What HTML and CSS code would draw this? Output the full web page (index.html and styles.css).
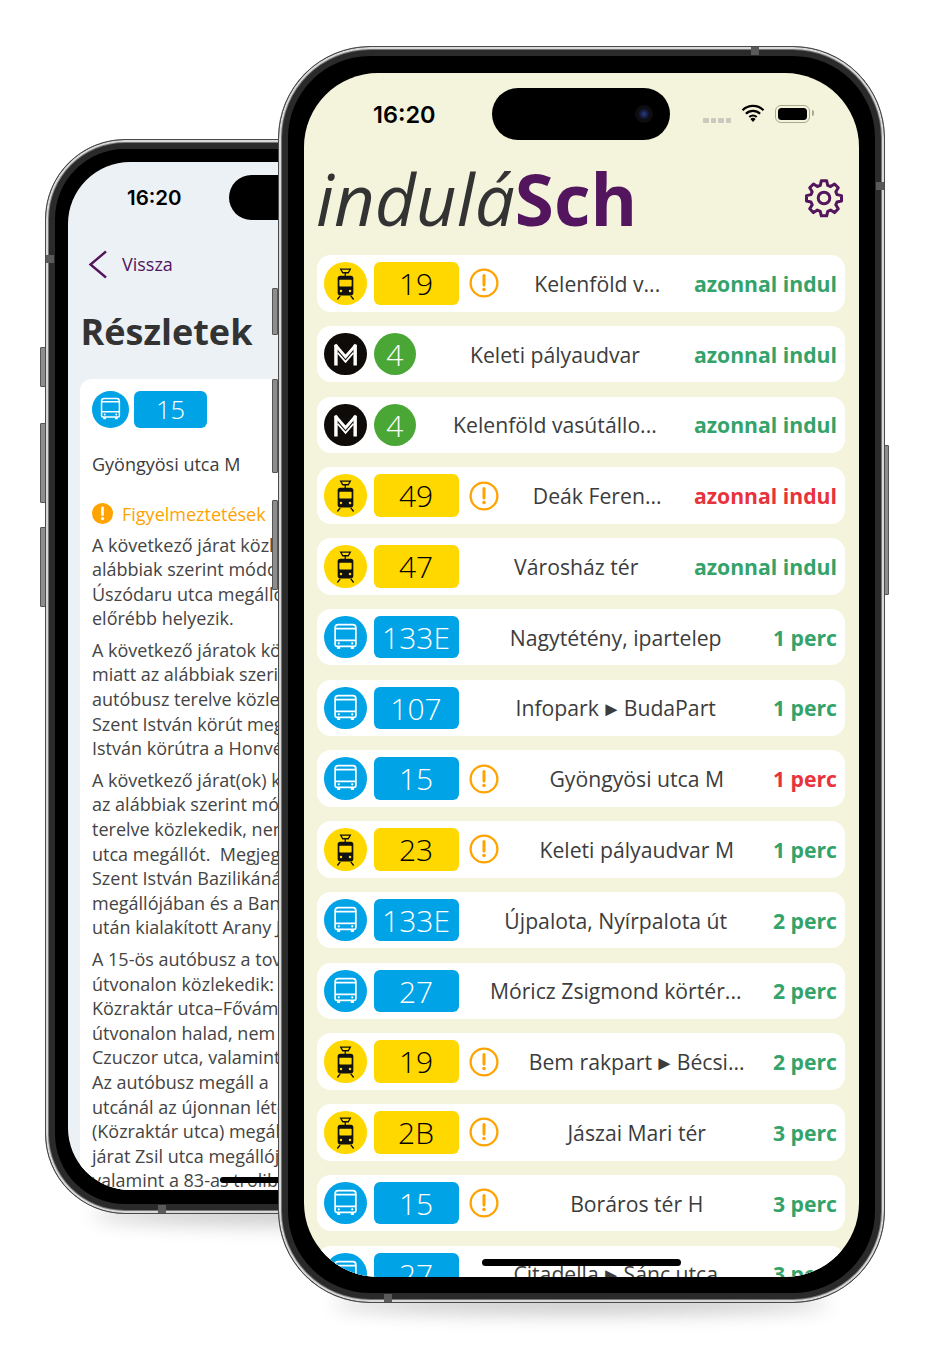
FILE: index.html
```html
<!DOCTYPE html>
<html lang="hu">
    <head>
        <meta charset="UTF-8">
        <title>induláSch</title>
        <link rel="stylesheet" href="styles.css">
    </head>
    <body>
        <svg class="defs" width="0" height="0">
            <symbol id="bus" viewBox="0 0 42 42">
                <path d="M14 8.500h14.500a3 3 0 0 1 3 3v17a1.500 1.500 0 0 1-1.500 1.500h-17.500a1.500 1.500 0 0 1-1.500-1.500v-17a3 3 0 0 1 3-3z" fill="none" stroke="#fff" stroke-width="1.700"/>
                <path d="M11 12.500h20.500M11 24h20.500" fill="none" stroke="#fff" stroke-width="1.700"/>
                <path d="M13 30h3v2.600h-3zM26.500 30h3v2.600h-3z" fill="#fff"/>
                <circle cx="14.600" cy="27" r="1.100" fill="#fff"/>
                <circle cx="27.900" cy="27" r="1.100" fill="#fff"/>
            </symbol>
            <symbol id="tram" viewBox="0 0 42 42">
                <path d="M16.500 7h9.500l-2 3.600h-5.500z" fill="none" stroke="#111" stroke-width="1.300"/>
                <path d="M21 10.600v3.200" stroke="#111" stroke-width="1.300"/>
                <rect x="13.500" y="13.500" width="15.500" height="19.500" rx="2.600" fill="#111"/>
                <rect x="15.200" y="17.600" width="12.100" height="6.600" rx="0.800" fill="#ffd800"/>
                <circle cx="16.800" cy="28.600" r="1.200" fill="#ffd800"/>
                <circle cx="25.700" cy="28.600" r="1.200" fill="#ffd800"/>
                <path d="M16 33.500l-2.800 3.600M26.500 33.500l2.800 3.600" stroke="#111" stroke-width="1.400"/>
            </symbol>
            <symbol id="metro" viewBox="0 0 42 42">
                <path d="M11.800 32V11.500M30.800 32V11.500" stroke="#fff" stroke-width="3.400"/>
                <path d="M11 11.500L21.300 23.500 31.600 11.500" fill="none" stroke="#fff" stroke-width="2.800"/>
                <path d="M13.500 19.500L21.300 28.500 29.100 19.500" fill="none" stroke="#fff" stroke-width="1.800"/>
            </symbol>
            <symbol id="warn" viewBox="0 0 30 30">
                <circle cx="15" cy="15" r="13.400" fill="none" stroke="#ffa300" stroke-width="2.300"/>
                <path d="M15 7.500v9.500" stroke="#ffa300" stroke-width="3" stroke-linecap="round"/>
                <circle cx="15" cy="21.500" r="1.800" fill="#ffa300"/>
            </symbol>
        </svg>

        <!-- hátsó telefon -->
        <div class="phone phone-back">
            <span class="side-btn sb-1"></span>
            <span class="side-btn sb-2"></span>
            <span class="side-btn sb-3"></span>
            <div class="body">
                <span class="notch notch-top"></span>
                <span class="notch notch-left"></span>
                <span class="notch notch-bottom"></span>
                <div class="screen">
                    <div class="status"><span class="time">16:20</span></div>
                    <div class="island"></div>
                    <div class="back-link">
                        <svg width="20" height="29" viewBox="0 0 20 29"><path d="M18 1.500L2.500 14.500 18 27.500" fill="none" stroke="#52155e" stroke-width="2.400"/></svg>
                        <span>Vissza</span>
                    </div>
                    <h2 class="details-title">Részletek</h2>
                    <div class="card">
                        <div class="card-head">
                            <svg class="route-icon bg-blue"><use href="#bus"/></svg>
                            <span class="badge bg-blue">15</span>
                        </div>
                        <p class="stop-name">Gyöngyösi utca M</p>
                        <div class="warn-title">
                            <svg width="21" height="21" viewBox="0 0 21 21"><circle cx="10.500" cy="10.500" r="10.500" fill="#ffa300"/><path d="M10.500 4.800v7" stroke="#fff" stroke-width="2.600" stroke-linecap="round"/><circle cx="10.500" cy="15.600" r="1.600" fill="#fff"/></svg>
                            <span>Figyelmeztetések</span>
                        </div>
                        <p class="alert">A következő járat közlekedése<br>alábbiak szerint módosul:<br>Úszódaru utca megállóhelyét<br>előrébb helyezik.</p>
                        <p class="alert">A következő járatok közlekedése<br>miatt az alábbiak szerint:<br>autóbusz terelve közlekedik<br>Szent István körút megállóig,<br>István körútra a Honvéd utca</p>
                        <p class="alert">A következő járat(ok) közlekedése<br>az alábbiak szerint módosul:<br>terelve közlekedik, nem érinti<br>utca megállót.&nbsp; Megjegyzés:<br>Szent István Bazilikánál<br>megállójában és a Bank utca<br>után kialakított Arany János</p>
                        <p class="alert">A 15-ös autóbusz a további<br>útvonalon közlekedik:<br>Közraktár utca–Fővám tér<br>útvonalon halad, nem érinti<br>Czuczor utca, valamint<br>Az autóbusz megáll a<br>utcánál az újonnan létesített<br>(Közraktár utca) megállóban<br>járat Zsil utca megállójában,<br>valamint a 83-as trolibusz</p>
                    </div>
                    <div class="home-bar"></div>
                </div>
            </div>
        </div>

        <!-- első telefon -->
        <div class="phone phone-front">
            <span class="side-btn sf-1"></span>
            <span class="side-btn sf-2"></span>
            <span class="side-btn sf-3"></span>
            <span class="side-btn sf-4"></span>
            <div class="body">
                <span class="notch notch-top"></span>
                <span class="notch notch-right"></span>
                <span class="notch notch-bottom"></span>
                <div class="screen">
                    <div class="status">
                        <span class="time">16:20</span>
                        <div class="status-right">
                            <span class="signal"><i></i><i></i><i></i><i></i></span>
                            <svg width="24" height="18" viewBox="0 0 24 18"><path d="M1.500 6.200a15 15 0 0 1 21 0M4.900 9.700a10.200 10.200 0 0 1 14.200 0M8.300 13a5.500 5.500 0 0 1 7.400 0" fill="none" stroke="#000" stroke-width="2.200"/><path d="M12 18l-2.600-3a3.800 3.800 0 0 1 5.200 0z" fill="#000"/></svg>
                            <span class="battery"><i></i></span>
                        </div>
                    </div>
                    <div class="island"><span class="camera"></span></div>
                    <header class="app-head">
                        <h1 class="logo"><em>indulá</em><b>Sch</b></h1>
                        <svg class="gear" width="40" height="40" viewBox="0 0 40 40"><path d="M17.300 2.800h5.400l1 4.500 2.900 1.200 3.900-2.500 3.800 3.800-2.500 3.900 1.200 2.900 4.500 1v5.400l-4.500 1-1.200 2.900 2.500 3.900-3.800 3.800-3.900-2.500-2.900 1.200-1 4.500h-5.400l-1-4.500-2.900-1.200-3.900 2.500-3.800-3.800 2.500-3.900-1.200-2.900-4.500-1v-5.400l4.500-1 1.200-2.900-2.500-3.900 3.800-3.800 3.900 2.500 2.900-1.200z" fill="none" stroke="#52155e" stroke-width="3" stroke-linejoin="round"/><circle cx="20" cy="20" r="5.800" fill="none" stroke="#52155e" stroke-width="3"/></svg>
                    </header>
                    <div class="list">
                        <div class="row"><svg class="route-icon bg-yellow"><use href="#tram"/></svg><span class="badge bg-yellow dark">19</span><svg class="warn"><use href="#warn"/></svg><span class="dest">Kelenföld v...</span><span class="eta">azonnal indul</span></div>
                        <div class="row"><svg class="route-icon bg-black"><use href="#metro"/></svg><span class="badge metro-badge">4</span><span class="dest">Keleti pályaudvar</span><span class="eta">azonnal indul</span></div>
                        <div class="row"><svg class="route-icon bg-black"><use href="#metro"/></svg><span class="badge metro-badge">4</span><span class="dest">Kelenföld vasútállo...</span><span class="eta">azonnal indul</span></div>
                        <div class="row"><svg class="route-icon bg-yellow"><use href="#tram"/></svg><span class="badge bg-yellow dark">49</span><svg class="warn"><use href="#warn"/></svg><span class="dest">Deák Feren...</span><span class="eta late">azonnal indul</span></div>
                        <div class="row"><svg class="route-icon bg-yellow"><use href="#tram"/></svg><span class="badge bg-yellow dark">47</span><span class="dest">Városház tér</span><span class="eta">azonnal indul</span></div>
                        <div class="row"><svg class="route-icon bg-blue"><use href="#bus"/></svg><span class="badge bg-blue">133E</span><span class="dest">Nagytétény, ipartelep</span><span class="eta">1 perc</span></div>
                        <div class="row"><svg class="route-icon bg-blue"><use href="#bus"/></svg><span class="badge bg-blue">107</span><span class="dest">Infopark <span class="arrow">►</span> BudaPart</span><span class="eta">1 perc</span></div>
                        <div class="row"><svg class="route-icon bg-blue"><use href="#bus"/></svg><span class="badge bg-blue">15</span><svg class="warn"><use href="#warn"/></svg><span class="dest">Gyöngyösi utca M</span><span class="eta late">1 perc</span></div>
                        <div class="row"><svg class="route-icon bg-yellow"><use href="#tram"/></svg><span class="badge bg-yellow dark">23</span><svg class="warn"><use href="#warn"/></svg><span class="dest">Keleti pályaudvar M</span><span class="eta">1 perc</span></div>
                        <div class="row"><svg class="route-icon bg-blue"><use href="#bus"/></svg><span class="badge bg-blue">133E</span><span class="dest">Újpalota, Nyírpalota út</span><span class="eta">2 perc</span></div>
                        <div class="row"><svg class="route-icon bg-blue"><use href="#bus"/></svg><span class="badge bg-blue">27</span><span class="dest">Móricz Zsigmond körtér...</span><span class="eta">2 perc</span></div>
                        <div class="row"><svg class="route-icon bg-yellow"><use href="#tram"/></svg><span class="badge bg-yellow dark">19</span><svg class="warn"><use href="#warn"/></svg><span class="dest">Bem rakpart <span class="arrow">►</span> Bécsi...</span><span class="eta">2 perc</span></div>
                        <div class="row"><svg class="route-icon bg-yellow"><use href="#tram"/></svg><span class="badge bg-yellow dark">2B</span><svg class="warn"><use href="#warn"/></svg><span class="dest">Jászai Mari tér</span><span class="eta">3 perc</span></div>
                        <div class="row"><svg class="route-icon bg-blue"><use href="#bus"/></svg><span class="badge bg-blue">15</span><svg class="warn"><use href="#warn"/></svg><span class="dest">Boráros tér H</span><span class="eta">3 perc</span></div>
                        <div class="row"><svg class="route-icon bg-blue"><use href="#bus"/></svg><span class="badge bg-blue">27</span><span class="dest">Citadella <span class="arrow">►</span> Sánc utca</span><span class="eta">3 perc</span></div>
                    </div>
                    <div class="home-bar"></div>
                </div>
            </div>
        </div>
    </body>
</html>
```

FILE: styles.css
```css
* {
    box-sizing: border-box;
}
html, body {
    margin: 0;
    padding: 0;
    background: #fff;
}
body {
    position: relative;
    width: 936px;
    height: 1361px;
    overflow: hidden;
    font-family: "Open Sans", sans-serif;
    color: #3c3c3c;
}
.defs {
    position: absolute;
}

/* telefon váz */
.phone {
    position: absolute;
}
.phone-front {
    z-index: 2;
    left: 278px;
    top: 46px;
    width: 607px;
    height: 1257px;
}
.phone-back {
    z-index: 1;
    left: 45px;
    top: 139px;
    width: 519px;
    height: 1075px;
}
.phone::after {
    content: "";
    position: absolute;
    left: 9%;
    right: 9%;
    bottom: 2px;
    height: 20px;
    z-index: 0;
    box-shadow: 0 12px 20px rgba(0, 0, 0, 0.24);
    border-radius: 50%;
}
.body {
    position: relative;
    z-index: 1;
    width: 100%;
    height: 100%;
    background: #000;
    border: 1px solid #4a4a4a;
    box-shadow: inset 0 0 0 2px #d8d8d8, inset 0 0 0 3px #777, inset 0 0 0 9px #2a2a2a;
}
.phone-front .body {
    border-radius: 92px;
    padding: 26px 25px 25px 25px;
}
.phone-back .body {
    border-radius: 80px;
    padding: 22px 21px 23px 22px;
}
.screen {
    position: relative;
    height: 100%;
    overflow: hidden;
}
.phone-front .screen {
    border-radius: 74px;
    background: #f4f4dc;
}
.phone-back .screen {
    border-radius: 62px;
    background: #ecf1f6;
}
.notch {
    position: absolute;
    background: #5a5a5a;
}
.notch-top {
    top: 0;
    left: 78%;
    width: 8px;
    height: 8px;
}
.notch-right {
    right: 0;
    top: 135px;
    width: 8px;
    height: 8px;
}
.notch-left {
    left: 0;
    top: 115px;
    width: 8px;
    height: 8px;
}
.notch-bottom {
    bottom: 0;
    width: 8px;
    height: 8px;
}
.phone-front .notch-bottom {
    left: 17.300%;
}
.phone-back .notch-bottom {
    left: 21.700%;
}
.side-btn {
    position: absolute;
    background: #8d8d8d;
    border: 1px solid #555;
    border-radius: 1px;
    width: 6px;
}
.sb-1 { left: -5px; top: 208px; height: 40px; }
.sb-2 { left: -5px; top: 284px; height: 80px; }
.sb-3 { left: -5px; top: 388px; height: 80px; }
.sf-1 { left: -6px; top: 242px; height: 47px; }
.sf-2 { left: -6px; top: 333px; height: 94px; }
.sf-3 { left: -6px; top: 454px; height: 90px; }
.sf-4 { right: -4px; top: 399px; height: 150px; }

/* állapotsor */
.status {
    display: flex;
    align-items: center;
}
.time {
    font-family: Inter, sans-serif;
    font-weight: 600;
    color: #000;
}
.phone-front .status {
    height: 82px;
    padding-left: 69px;
    justify-content: space-between;
}
.phone-front .time {
    font-size: 23.500px;
}
.phone-back .status {
    height: 70px;
    padding-left: 59px;
}
.phone-back .time {
    font-size: 20.500px;
}
.island {
    position: absolute;
    background: #000;
}
.phone-front .island {
    left: 188px;
    top: 15px;
    width: 178px;
    height: 52px;
    border-radius: 26px;
}
.phone-back .island {
    left: 161px;
    top: 13px;
    width: 152px;
    height: 45px;
    border-radius: 23px;
}
.camera {
    position: absolute;
    right: 17px;
    top: 17px;
    width: 18px;
    height: 18px;
    border-radius: 50%;
    background: radial-gradient(circle, #2c3b8a 0, #1a2350 22%, #0d0d12 45%, #0b0b0f 100%);
}
.status-right {
    display: flex;
    align-items: center;
    margin-right: 49px;
    gap: 10px;
}
.signal {
    display: flex;
    gap: 2px;
    margin-top: 12px;
}
.signal i {
    width: 5.500px;
    height: 5px;
    border-radius: 1px;
    background: #c9c9bd;
}
.status-right svg {
    margin-top: -2px;
}
.battery {
    position: relative;
    width: 35px;
    height: 18px;
    padding: 2px;
    margin-top: -1px;
    border: 1.500px solid #a9a98f;
    border-radius: 6px;
}
.battery i {
    display: block;
    height: 100%;
    background: #000;
    border-radius: 3.500px;
}
.battery::after {
    content: "";
    position: absolute;
    right: -5px;
    top: 4px;
    width: 2px;
    height: 6px;
    background: #a9a98f;
    border-radius: 0 2px 2px 0;
}

/* fejléc */
.app-head {
    display: flex;
    align-items: center;
    justify-content: space-between;
    height: 100px;
    padding: 0 15px 12px 12px;
}
.logo {
    margin: 0;
    font-size: 71px;
    line-height: 90px;
    white-space: nowrap;
}
.logo em {
    font-weight: 400;
    color: #333;
}
.logo b {
    font-weight: 700;
    color: #52155e;
}
.gear {
    margin-top: -2px;
}

/* lista */
.list {
    display: flex;
    flex-direction: column;
    gap: 14.250px;
    padding: 0 14px 0 13px;
}
.row {
    display: flex;
    align-items: center;
    flex: none;
    height: 56.500px;
    padding: 0 8px 0 7px;
    gap: 7px;
    background: #fff;
    border-radius: 14px;
}
.route-icon {
    flex: none;
    width: 42.500px;
    height: 42.500px;
    border-radius: 50%;
}
.bg-yellow { background: #ffd800; }
.bg-blue { background: #00a3e6; }
.bg-black { background: #0f0b08; }
.badge {
    flex: none;
    width: 85px;
    height: 42.500px;
    line-height: 44px;
    text-align: center;
    font-size: 30px;
    font-weight: 300;
    color: #fff;
    border-radius: 6px;
}
.badge.dark {
    color: #000;
}
.metro-badge {
    width: 42.500px;
    background: #4aa736;
    border-radius: 50%;
}
.warn {
    flex: none;
    width: 30px;
    height: 30px;
    margin: 0 2px 0 3px;
}
.dest {
    flex: 1;
    min-width: 0;
    text-align: center;
    font-size: 21.200px;
    color: #3c3c3c;
    white-space: nowrap;
}
.arrow {
    font-size: 20px;
    line-height: 1;
    margin: 0 -3px;
}
.eta {
    flex: none;
    font-size: 21.200px;
    font-weight: 700;
    color: #34a36a;
    white-space: nowrap;
}
.eta.late {
    color: #e8323c;
}
.home-bar {
    position: absolute;
    background: #000;
    border-radius: 4px;
}
.phone-front .home-bar {
    left: 178px;
    bottom: 11px;
    width: 199px;
    height: 7px;
}
.phone-back .home-bar {
    left: 152px;
    bottom: 7px;
    width: 170px;
    height: 6px;
}

/* részletek */
.back-link {
    display: flex;
    align-items: center;
    gap: 14px;
    height: 32px;
    padding-left: 20px;
    margin-top: 16px;
    color: #52155e;
    font-size: 18px;
}
.details-title {
    margin: 14px 0 0 12.500px;
    height: 85px;
    line-height: 76px;
    font-size: 36px;
    font-weight: 700;
    color: #333;
}
.card {
    margin: 0 12px;
    padding: 12px;
    background: #fff;
    border-radius: 12px;
    white-space: nowrap;
}
.card-head {
    display: flex;
    gap: 5.500px;
}
.card-head .route-icon {
    width: 36.500px;
    height: 36.500px;
}
.card-head .badge {
    width: 73px;
    height: 36.500px;
    line-height: 37.500px;
    font-size: 25.500px;
}
.stop-name {
    margin: 24px 0 0;
    font-size: 18px;
    line-height: 25px;
}
.warn-title {
    display: flex;
    align-items: center;
    gap: 9px;
    margin: 24px 0 6px;
    height: 26px;
    color: #ffa300;
    font-size: 18px;
}
.alert {
    margin: 0 0 7px;
    font-size: 18px;
    line-height: 24.600px;
    color: #444;
}
```
